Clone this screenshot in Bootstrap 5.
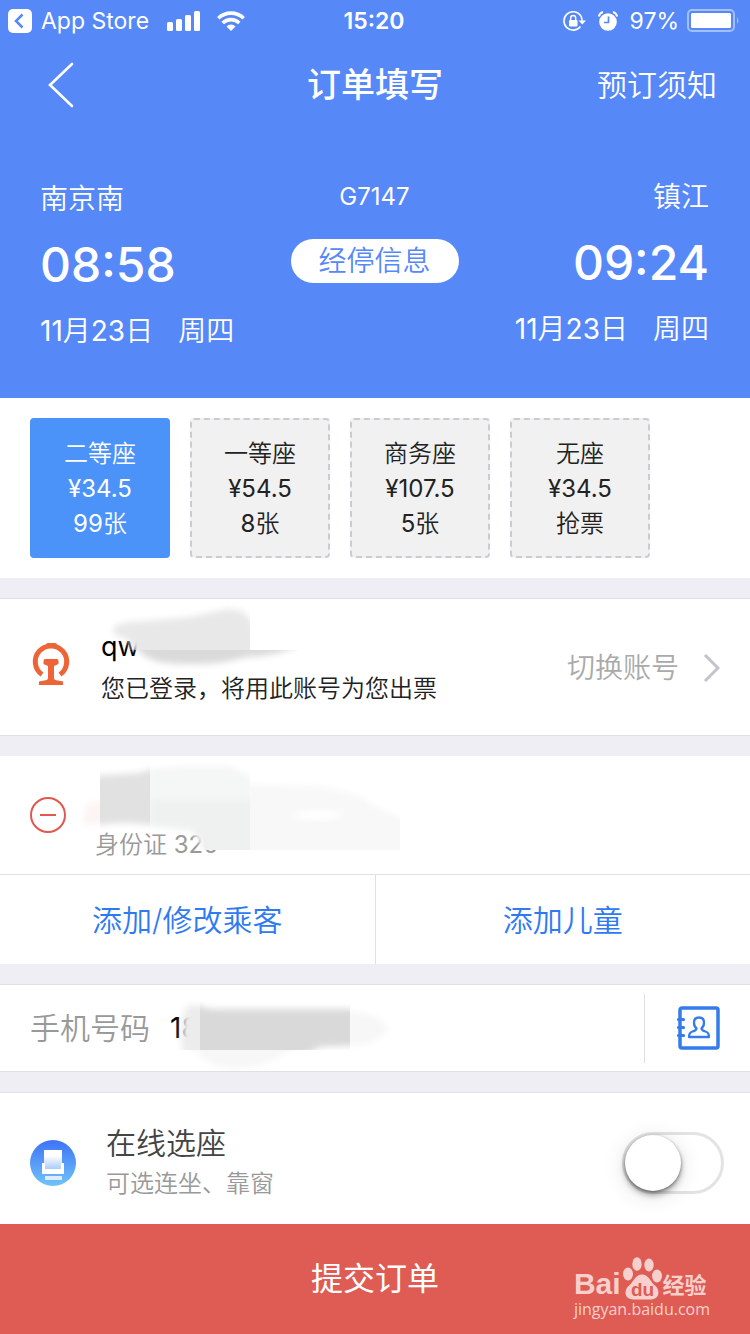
<!DOCTYPE html>
<html lang="zh-CN">
<head>
<meta charset="utf-8">
<meta name="viewport" content="width=device-width, initial-scale=1">
<title>订单填写</title>
<link rel="stylesheet" href="https://cdn.jsdelivr.net/npm/bootstrap@5.3.0/dist/css/bootstrap.min.css">
<style>
  body { font-family: Inter, "Noto Sans CJK SC", sans-serif; font-weight: 350; font-size: 28px; line-height: 40px; background: #efeef4; color: #222; }
  button, input { font-weight: 350; }
  svg { display: block; flex: none; }
  .num { font-weight: 400; }
  .hero { background: #5688f7; color: #fff; padding-bottom: 34px; }
  .statusbar { height: 42px; padding: 0 10px 0 8px; font-size: 23px; font-weight: 400; }
  .statusbar .app-name { margin: 0 18px 0 9px; }
  .side { flex: 1 1 0; }
  .topnav { height: 86px; padding: 0 33px; }
  .topnav h1 { font-size: 34px; font-weight: 500; }
  .topnav a { color: #fff; font-size: 30px; text-decoration: none; }
  .back-link { padding-left: 15px; }
  .trip { padding: 36px 41px 0 40px; }
  .stop > div { line-height: 66px; }
  .stop time { display: block; font-size: 48px; font-weight: 500; line-height: 66px; }
  .depart { padding-top: 2px; }
  .weekday { margin-left: 25px; }
  .train-no { font-size: 24px; line-height: 66px; }
  .stops-btn { border: 0; border-radius: 22px; background: #fff; color: #5688f7; width: 168px; height: 44px; padding: 0; font-size: 28px; line-height: 44px; margin-top: 9px; }
  .seats { background: #fff; padding: 20px 30px; gap: 20px; }
  .seat { width: 140px; height: 140px; padding: 0; border: 2px dashed #c9cdd2; border-radius: 4px; background: #f1f1f1; color: #222; font-size: 24px; line-height: 35px; }
  .seat.chosen { background: #4b93f8; border: 2px solid #4b93f8; color: #fff; }
  .panel { background: #fff; margin-top: 20px; }
  .lined { border-top: 1px solid #e0e0e4; border-bottom: 1px solid #e0e0e4; }
  .account { padding: 27px 30px 25px; }
  .account-text { margin-left: 30px; line-height: 42px; font-size: 24px; }
  .account-text .user-id { font-size: 27px; color: #000; font-weight: 400; }
  .switch-link { color: #aaa; text-decoration: none; gap: 24px; }
  .passenger { height: 118px; padding: 0 30px; }
  .remove-btn { border: 0; background: none; padding: 0; }
  .id-line { font-size: 24px; color: #999; margin: 60px 0 0 29px; }
  .add-row { border-top: 1px solid #e0e0e2; }
  .add-row button { border: 0; background: none; color: #2e7af3; font-size: 30px; height: 89px; }
  .add-row button + button { border-left: 1px solid #e0e0e2; }
  .phone { height: 88px; padding: 0 30px; }
  .phone label { font-size: 30px; color: #999; }
  .phone input { border: 0; outline: 0; background: none; font-size: 28px; color: #000; margin-left: 20px; min-width: 0; padding: 0; font-weight: 400; }
  .contacts-btn { border: 0; border-left: 1px solid #e0e0e2; background: none; height: 69px; padding: 0 0 0 31px; }
  .choose { height: 132px; padding: 8px 26px 0 30px; border-top: 1px solid #dfe3e6; }
  .choose-text { margin-left: 30px; }
  .choose-text label { display: block; font-size: 30px; line-height: 42px; color: #444; }
  .choose-text small { display: block; font-size: 24px; line-height: 40px; color: #999; }
  .toggle { appearance: none; width: 102px; height: 62px; border: 3px solid #e3e3e3; border-radius: 31px; background: #fff; margin: 0; }
  .toggle::before { content: ""; display: block; width: 56px; height: 56px; border-radius: 50%; background: #fff; box-shadow: 0 4px 6px rgba(0,0,0,.35), 0 1px 3px rgba(0,0,0,.35), 0 4px 24px rgba(0,0,0,.12); }
  .toggle:checked { background: #4b93f8; }
  .toggle:checked::before { margin-left: auto; }
  .submit { border: 0; background: #de5c54; color: #fff; font-size: 32px; height: 110px; font-weight: 400; }
  .smudge { position: absolute; pointer-events: none; }
  .watermark { position: absolute; right: 40px; bottom: 16px; color: #f7cfcc; pointer-events: none; }
  .brand { height: 44px; }
  .brand-latin { font: 700 30px/32px "Liberation Sans", sans-serif; }
  .brand-han { font-size: 22px; line-height: 30px; font-weight: 700; }
  .site { font: 400 16px/18px "Open Sans", sans-serif; }
</style>
</head>
<body>
<header class="hero">
  <div class="statusbar d-flex align-items-center">
    <div class="side d-flex align-items-center">
      <svg width="24" height="24" viewBox="0 0 24 24"><rect width="24" height="24" rx="5" fill="#fff"/><path d="M14.500 5.500 8 12l6.500 6.500" fill="none" stroke="#5688f7" stroke-width="2.500"/></svg>
      <span class="app-name">App Store</span>
      <svg width="34" height="20" viewBox="0 0 34 20" fill="#fff"><rect y="11" width="6" height="9" rx="1.500"/><rect x="9" y="8" width="6" height="12" rx="1.500"/><rect x="18" y="4" width="6" height="16" rx="1.500"/><rect x="27" width="6" height="20" rx="1.500"/></svg>
      <svg class="ms-3" width="28" height="20" viewBox="0 0 28 20" fill="none" stroke="#fff" stroke-width="3.600"><path d="M1.300 7.200a18.500 18.500 0 0 1 25.400 0"/><path d="M5.700 12a12 12 0 0 1 16.600 0"/><path d="M14 20l-4.500-4.600a6.500 6.500 0 0 1 9 0z" fill="#fff" stroke="none"/></svg>
    </div>
    <span class="fw-semibold">15:20</span>
    <div class="side d-flex align-items-center justify-content-end">
      <svg width="23" height="20" viewBox="0 0 23 20"><path d="M17.800 4.800A9.200 9.200 0 1 0 17.500 15.500M17.800 4.800a9 9 0 0 1 1.200 5" fill="none" stroke="#fff" stroke-width="1.600"/><path d="M15.500 9.500H23l-3.700 4z" fill="#fff"/><rect x="6" y="9" width="8.500" height="6.500" rx="1" fill="#fff"/><path d="M7.700 9V7a2.500 2.500 0 0 1 5 0v2" fill="none" stroke="#fff" stroke-width="1.400"/></svg>
      <svg class="ms-2 me-2" width="28" height="20" viewBox="-4 0 28 20"><circle cx="10" cy="11" r="8.800" fill="#fff"/><path d="M.8 5.500A6 6 0 0 1 5 1M15 1a6 6 0 0 1 4.200 4.500" fill="none" stroke="#fff" stroke-width="2"/><path d="M10.500 5.500v6H6" fill="none" stroke="#5688f7" stroke-width="1.700"/></svg>
      <span class="me-2">97%</span>
      <svg width="53" height="24" viewBox="0 0 53 24"><rect x="1" y="1" width="46" height="21" rx="4" fill="none" stroke="#a3bffb" stroke-width="2"/><rect x="4" y="4" width="40" height="15" rx="1.500" fill="#fff"/><path d="M50 8q3 3.500 0 7z" fill="#a3bffb"/></svg>
    </div>
  </div>
  <nav class="topnav d-flex align-items-center">
    <div class="side"><a href="#back" class="back-link d-block" aria-label="返回"><svg width="26" height="46" viewBox="0 0 26 46"><path d="M24 2 2 23l22 21" fill="none" stroke="#fff" stroke-width="2.600" stroke-linecap="round"/></svg></a></div>
    <h1 class="m-0">订单填写</h1>
    <div class="side text-end"><a href="#notice">预订须知</a></div>
  </nav>
  <section class="trip d-flex">
    <div class="stop side depart">
      <div>南京南</div><time>08:58</time><div><span class="num">11</span>月<span class="num">23</span>日<span class="weekday">周四</span></div>
    </div>
    <div class="text-center">
      <div class="train-no num">G7147</div>
      <button type="button" class="stops-btn d-block">经停信息</button>
    </div>
    <div class="stop side text-end">
      <div>镇江</div><time>09:24</time><div><span class="num">11</span>月<span class="num">23</span>日<span class="weekday">周四</span></div>
    </div>
  </section>
</header>
<main>
  <section class="seats d-flex flex-wrap">
    <button type="button" class="seat chosen">二等座<br><span class="num">¥34.5</span><br><span class="num">99</span>张</button>
    <button type="button" class="seat">一等座<br><span class="num">¥54.5</span><br><span class="num">8</span>张</button>
    <button type="button" class="seat">商务座<br><span class="num">¥107.5</span><br><span class="num">5</span>张</button>
    <button type="button" class="seat">无座<br><span class="num">¥34.5</span><br>抢票</button>
  </section>

  <section class="panel lined account d-flex align-items-center position-relative">
    <svg class="align-self-start mt-3" width="41" height="43" viewBox="-2 0 41 43" fill="#ec6437"><path d="M10 32.500A15.700 15.700 0 1 1 28 32.500" fill="none" stroke="#ec6437" stroke-width="5"/><path d="M14 3q0-2 2-2h7q2 0 2 2v3H14zM13 17h12q1.500 0 1.500 2v3l-4.500 2v12q0 2 4 2.500l5 1V43H7v-3.500l5-1q4-.5 4-2.500V24l-4.500-2v-3q0-2 1.500-2z"/></svg>
    <div class="account-text"><div class="user-id">qw</div><div>您已登录，将用此账号为您出票</div></div>
    <a href="#account" class="switch-link ms-auto d-flex align-items-center">切换账号
      <svg width="17" height="30" viewBox="0 0 17 30"><path d="M2 2l13 13L2 28" fill="none" stroke="#c2c3cc" stroke-width="3"/></svg></a>
    <svg class="smudge top-0 start-0" width="310" height="84" viewBox="0 0 310 84">
      <defs><filter id="soft" x="-20%" y="-20%" width="140%" height="140%"><feGaussianBlur stdDeviation="3"/></filter>
      <clipPath id="a1"><path d="M90 0H250V51H90z"/></clipPath><clipPath id="a2"><path d="M100 51H310V84H100z"/></clipPath></defs>
      <g clip-path="url(#a1)"><path d="M114 28Q122 22 145 22L190 18 228 10 242 12 252 22 265 60H138L128 40 114 36z" fill="#e8e8e8" filter="url(#soft)"/></g>
      <g clip-path="url(#a2)"><path d="M136 40H310Q285 57 246 58 220 66 190 65 145 66 136 48z" fill="#dadada" filter="url(#soft)"/></g>
    </svg>
  </section>

  <section class="panel">
    <div class="passenger d-flex align-items-center position-relative">
      <button type="button" class="remove-btn" aria-label="删除乘客"><svg width="36" height="36" viewBox="0 0 36 36" fill="none" stroke="#e0584f" stroke-width="2"><circle cx="18" cy="18" r="17"/><path d="M10 18h16"/></svg></button>
      <div class="id-line">身份证 <span class="num">320</span></div>
      <svg class="smudge top-0 start-0" width="450" height="118" viewBox="0 0 450 118">
        <defs><clipPath id="b1"><path d="M100 0H150V118H100z"/></clipPath><clipPath id="b2"><path d="M150 0H250V94H150z"/></clipPath><clipPath id="b3"><path d="M250 0H400V94H250z"/></clipPath></defs>
        <path d="M88 46h22v22H82z" fill="#fdf4f4" filter="url(#soft)"/>
        <g clip-path="url(#b1)"><path d="M90 20 140 17 165 8V70L130 67 90 68z" fill="#e1e1e1" filter="url(#soft)"/></g>
        <g clip-path="url(#b2)"><path d="M140 14 180 10 230 10 262 26V110H206Q206 84 190 74L140 70z" fill="#f5f6f6" filter="url(#soft)"/><path d="M150 44H262V110H208Q206 84 190 72L150 68z" fill="#eff1f1" filter="url(#soft)"/></g>
        <g clip-path="url(#b3)"><path d="M240 28 310 30Q355 33 375 50L410 66V104H240z" fill="#f8f8f8" filter="url(#soft)"/><ellipse cx="318" cy="59" rx="24" ry="5" fill="#fff" filter="url(#soft)"/></g>
      </svg>
    </div>
    <div class="add-row d-flex">
      <button type="button" class="side">添加/修改乘客</button>
      <button type="button" class="side">添加儿童</button>
    </div>
  </section>

  <section class="panel lined phone d-flex align-items-center position-relative">
    <label for="phone">手机号码</label>
    <input id="phone" type="tel" value="18" class="flex-grow-1">
    <button type="button" class="contacts-btn" aria-label="通讯录"><svg width="44" height="44" viewBox="0 0 44 44" fill="none" stroke="#347cec"><rect x="4" y="2" width="38" height="40" rx="2" stroke-width="3.500"/><path d="M2.500 13.500h5M2.500 21.500h5M2.500 29.500h5" stroke-width="3.200" stroke-linecap="round"/><path d="M20.500 22.500q-2.500-2-2.500-6 0-5 5-5t5 5q0 4-2.500 6 .3 2 4 3 3.500 1 3.500 5.500H13q0-4.500 3.500-5.500 3.700-1 4-3z" stroke-width="2.300" stroke-linejoin="round"/></svg></button>
    <svg class="smudge top-0 start-0" width="400" height="86" viewBox="0 0 400 86">
      <defs><clipPath id="c1"><path d="M170 0H200V65H170z"/></clipPath><clipPath id="c2"><path d="M200 0H350V65H200z"/></clipPath><clipPath id="c3"><path d="M350 0H400V65H350zM170 65H350V86H170z"/></clipPath></defs>
      <g clip-path="url(#c1)"><path d="M188 20H215V75H185Q180 62 182 34z" fill="#ececec" filter="url(#soft)"/></g>
      <g clip-path="url(#c2)"><path d="M190 18 210 24H365V60L320 62 295 75H190z" fill="#d9d9d9" filter="url(#soft)"/></g>
      <g clip-path="url(#c3)"><path d="M340 26Q380 26 388 44 380 62 340 60zM182 56H305Q265 84 240 84 215 84 205 74z" fill="#f7f7f8" filter="url(#soft)"/></g>
    </svg>
  </section>

  <section class="panel choose d-flex align-items-center">
    <svg width="46" height="46" viewBox="0 0 46 46"><defs><linearGradient id="sky" x2="0" y2="1"><stop stop-color="#3e72f8"/><stop offset="1" stop-color="#70c4f7"/></linearGradient><linearGradient id="back" x2="0" y2="1"><stop offset=".3" stop-color="#fff"/><stop offset="1" stop-color="#a9cdf8"/></linearGradient></defs><circle cx="23" cy="23" r="23" fill="url(#sky)"/><path d="M12 23h22v11H12z" fill="#fff"/><path d="M14 10h18v19H14z" fill="url(#back)"/><path d="M12 23h3v6h16v-6h3v11H12z" fill="#fff"/><path d="M15 36h17v4H15z" fill="#dcecfd"/></svg>
    <div class="choose-text"><label for="pick">在线选座</label><small>可选连坐、靠窗</small></div>
    <input id="pick" type="checkbox" role="switch" class="toggle ms-auto">
  </section>
</main>
<footer class="position-relative">
  <button type="submit" class="submit w-100 d-block">提交订单</button>
  <div class="watermark">
    <div class="brand d-flex align-items-end">
      <span class="brand-latin">Bai</span>
      <svg width="42" height="44" viewBox="0 0 42 44" fill="#f7cfcc"><ellipse cx="7" cy="18" rx="5" ry="6.500"/><ellipse cx="16" cy="8" rx="4.700" ry="6.800"/><ellipse cx="28" cy="9" rx="4.700" ry="6.500"/><ellipse cx="36" cy="20" rx="5" ry="6.500"/><path d="M21 18.500c7 0 8 7 13 11 6 5 4 14-4 14H12c-8 0-10-9-4-14 5-4 6-11 13-11z"/><text x="10" y="40" font-family="Liberation Sans, sans-serif" font-weight="700" font-size="19" fill="#de5c54">du</text></svg>
      <span class="brand-han">经验</span>
    </div>
    <div class="site">jingyan.baidu.com</div>
  </div>
</footer>
<script src="https://cdn.jsdelivr.net/npm/bootstrap@5.3.0/dist/js/bootstrap.bundle.min.js"></script>
</body>
</html>
